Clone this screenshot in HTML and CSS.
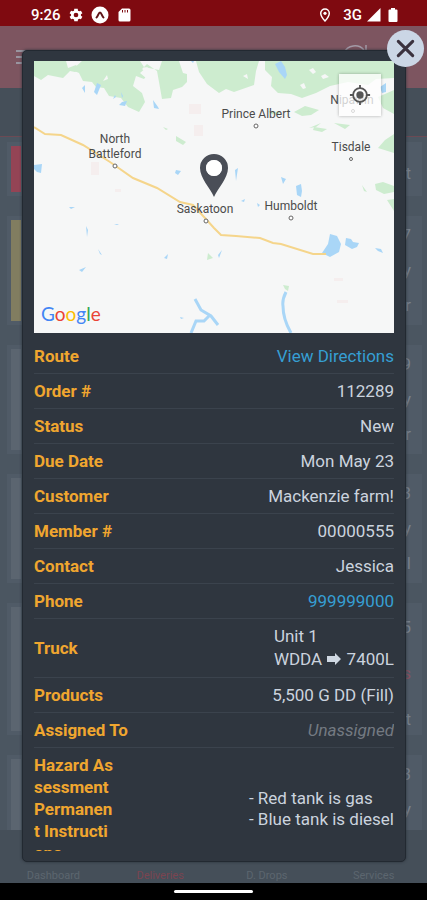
FILE: index.html
```html
<!DOCTYPE html>
<html lang="en">
<head>
<meta charset="utf-8">
<meta name="viewport" content="width=device-width, initial-scale=1">
<title>Deliveries</title>
<link rel="stylesheet" href="styles.css">
</head>
<body>
<header class="status">
  <div class="status-group">
    <span class="clock">9:26</span>
    <svg class="ico" viewBox="0 0 24 24"><path fill="#fff" d="M19.4 13a7.500 7.500 0 0 0 0-2l2.200-1.700-2.200-3.800-2.600 1a7.500 7.500 0 0 0-1.800-1L14.600 2.500H9.400L9 5.500a7.500 7.500 0 0 0-1.800 1l-2.600-1-2.200 3.800L4.600 11a7.500 7.500 0 0 0 0 2l-2.200 1.700 2.200 3.800 2.600-1a7.500 7.500 0 0 0 1.800 1l.4 3h5.200l.4-3a7.500 7.500 0 0 0 1.800-1l2.600 1 2.200-3.800zM12 15.500a3.500 3.500 0 1 1 0-7 3.500 3.500 0 0 1 0 7z"/></svg>
    <svg class="ico ico-app" viewBox="0 0 18 18"><circle cx="9" cy="9" r="8.500" fill="#fff"/><path d="M5.500 11.500C7 10.500 7.500 6.500 9 6.500s2 4 3.500 5" fill="none" stroke="#5d1418" stroke-width="2" stroke-linecap="round"/></svg>
    <svg class="ico" viewBox="0 0 16 16"><path fill="#fff" d="M6 1.500h7a1.500 1.500 0 0 1 1.500 1.500v10a1.500 1.500 0 0 1-1.500 1.500H4A1.500 1.500 0 0 1 2.500 13V5z"/><path d="M6.500 3v2.500M9 3v2.500M11.500 3v2.500" stroke="#7f0a10"/></svg>
  </div>
  <div class="status-group status-right">
    <svg class="ico" viewBox="0 0 16 16"><path d="M8 2a4.300 4.300 0 0 0-4.300 4.300C3.700 9.500 8 14 8 14s4.300-4.500 4.300-7.700A4.300 4.300 0 0 0 8 2z" fill="none" stroke="#fff" stroke-width="1.500"/><circle cx="8" cy="6.300" r="1.600" fill="#fff"/></svg>
    <span class="network">3G</span>
    <svg class="ico" viewBox="0 0 16 16"><path d="M1 14.500 14.500 1v13.500z" fill="#fff"/></svg>
    <svg class="ico ico-battery" viewBox="0 0 10 16"><path d="M3 1h4v1.500h1.500a1 1 0 0 1 1 1V14a1 1 0 0 1-1 1h-7a1 1 0 0 1-1-1V3.500a1 1 0 0 1 1-1H3z" fill="#fff"/></svg>
  </div>
</header>

<main class="stage">
  <div class="app" aria-hidden="true">
    <div class="app-bar">
      <svg class="menu" viewBox="0 0 20 16"><path d="M0 2h20M0 8h20M0 14h20" stroke="#a3aab5" stroke-width="1.500"/></svg>
      <svg class="sync" viewBox="0 0 28 28"><path d="M3 10a12 12 0 0 1 20-3M25 2v6h-7" fill="none" stroke="#a39aa6" stroke-width="1.500"/></svg>
    </div>
    <div class="filter-bar"></div>
    <div class="orders">
      <div class="order order-short order-red"><span>t</span></div>
      <div class="order order-yellow"><span>7</span><span>y</span><span>r</span></div>
      <div class="order"><span>9</span><span>y</span><span>r</span></div>
      <div class="order"><span>3</span><span>y</span><span>l</span></div>
      <div class="order order-tall"><span>5</span><span class="late">s</span><span>t</span></div>
      <div class="order"><span>3</span><span>y</span></div>
    </div>
    <div class="tabs"><span>Dashboard</span><span class="current">Deliveries</span><span>D. Drops</span><span>Services</span></div>
  </div>

  <section class="dialog" role="dialog">
    <button class="close" type="button" aria-label="Close"><svg viewBox="0 0 36 36"><path d="M11 11l14 14M25 11 11 25" stroke="#3b323e" stroke-width="3" stroke-linecap="round"/></svg></button>
    <div class="content">
      <div class="map">
        <svg class="map-art" viewBox="0 0 360 272" preserveAspectRatio="xMidYMid slice">
          <rect width="360" height="272" fill="#f6f7f7"/>
          <g fill="#cdeccf">
            <path d="M0 0h32l2 7 8-3 4 5-5 2-5-1-7 7-15-3-7 5-7-4z"/>
            <path d="M48 0h58l4 6 15 3 3-9h17l4 12 4 1v8l-5 5-9 3-2 8-9 1-3-17-2-11-10-7-5 5 6 5-4 5-8-3-3 10 9 7 3 9-6 10-11-5-7-9-12-2-5-8-8-1-4-5-9-1-4-8-7-3z"/>
            <path d="M162 0h63l-3 10-2 14-20 7-8-3-7 4-12-9-8-12z"/>
            <path d="M231 0h129v17l-18 1-8 6-20-3-18 4-14 7-14 5-11-4-13-1-7-7 1-9-7-7z"/>
            <path d="M344 36l16-7v24l-11-6zM260 51l11-6 14 4-8 5-9 1zM234 50l12 1-2 3-7-1zM275 67l12-5-5 4zM300 62l16 2-5 4z"/>
            <path d="M142 75l10 6-3 3-7-4zM129 66l5 2-2 1zM280 66l13 2-5 3-9-2zM360 73v19l-16-5 7-8zM341 123l8-2 11 4v6l-10 2-8-4zM353 139l7-1v12zM328 124l5 7-3-1zM174 192l5 5-6 2zM249 224l6 1-1 5-3-2z"/>
          </g>
          <g fill="#f6f7f7"><path d="M69 20l4-6 1 4zM209 15l4-2 1 5zM275 9l4-2 3 4-3 2zM287 15l4-2 4 3-6 2zM266 24l4-2 2 5-3 1zM106 12l7-6 5 5-6 6z"/></g>
          <g fill="#a9d6f7">
            <path d="M48 27l3-3v8zM60 31l3-9 4 2-4 10zM79 38l2-4 1 2zM88 41l5-1-2 5-6-1zM87 31l2 4-1 2zM119 39l5 7 1 2-5-1zM241 3l6-3 4 6 2 8-2 4-6-7zM346 26l6-4v9l-4 1zM157 0h3l-1 2zM76 72l1 3-1 2z"/>
            <path d="M0 104l8-1-1 9-4-1-3-3zM142 109l5 1-3 4-3-2zM201 109l3-2-2 13zM247 116l5 2-3 5zM262 125l5-2 1 7-1 6-4-2zM207 140l4-2-1 3zM223 142l3 2-2 2zM35 146h6l-4 2zM52 165l2 4-1 7zM80 163h5l-2 1zM64 188l4 6-2-1zM45 209l7-3-4 5zM130 197l4-4-1 5zM184 194l4-5-3 8zM146 256l4 1-3 1z"/>
            <path d="M296 173l7 2 4 8-2 8-9 5-8-4 6-9zM312 177l5 1 2 3 6 1-2 4-5 2-7-4zM341 187l6 1 2 4-5-2z"/>
          </g>
          <path d="M252 231q-4 8-3 14 0 13 8 27M161 238l6 11 10 6 7 9M176 254l-6 6h-8l-5 12" fill="none" stroke="#a9d6f7" stroke-width="3"/>
          <path d="M0 66l11 7 16 1 22 10 27 17 23 16 24 10 23 14 13 3 12 13 9 10 7 7 15 1 24 2 13 5 8 1 32 10h13" fill="none" stroke="#f5d58b" stroke-width="2"/>
          <g fill="#f5eeee"><path d="M155 43h12v10h-12zM160 64h9v11h-9zM57 101h8v13h-8zM81 128h6v3h-6zM303 239h11v3h-11zM300 217h9v3h-9z"/></g>
          <g fill="#fff" stroke="#666" stroke-width="1">
            <circle cx="222" cy="65" r="2"/><circle cx="81" cy="105" r="2"/><circle cx="172" cy="160" r="2"/><circle cx="257" cy="157" r="2"/><circle cx="317" cy="98" r="1.500"/><circle cx="319" cy="50" r="1.500"/>
          </g>
          <g class="place">
            <text x="222" y="57">Prince Albert</text>
            <text x="81" y="82">North</text>
            <text x="81" y="97">Battleford</text>
            <text x="171" y="152">Saskatoon</text>
            <text x="257" y="149">Humboldt</text>
            <text x="317" y="90">Tisdale</text>
            <text x="318" y="43">Nipawin</text>
          </g>
          <path fill-rule="evenodd" fill="#4a4e57" d="M180 93a14 14 0 0 0-14 14c0 10 10 20 14 29 4-9 14-19 14-29a14 14 0 0 0-14-14zm0 6a8 8 0 1 1 0 16 8 8 0 0 1 0-16z"/><circle cx="180" cy="107" r="8" fill="#fff"/>
          <text class="brand" x="7" y="260"><tspan fill="#4285f4">G</tspan><tspan fill="#ea4335">o</tspan><tspan fill="#fbbc05">o</tspan><tspan fill="#4285f4">g</tspan><tspan fill="#34a853">l</tspan><tspan fill="#ea4335">e</tspan></text>
        </svg>
        <button class="locate" type="button" aria-label="My location"><svg viewBox="0 0 24 24"><circle cx="12" cy="12" r="7.500" fill="none" stroke="#555" stroke-width="2"/><circle cx="12" cy="12" r="4" fill="#555"/><path d="M12 1v4M12 19v4M1 12h4M19 12h4" stroke="#555" stroke-width="2"/></svg></button>
      </div>
      <dl class="details">
        <div class="row"><dt>Route</dt><dd><a href="#route">View Directions</a></dd></div>
        <div class="row"><dt>Order #</dt><dd>112289</dd></div>
        <div class="row"><dt>Status</dt><dd>New</dd></div>
        <div class="row"><dt>Due Date</dt><dd>Mon May 23</dd></div>
        <div class="row"><dt>Customer</dt><dd>Mackenzie farm!</dd></div>
        <div class="row"><dt>Member #</dt><dd>00000555</dd></div>
        <div class="row"><dt>Contact</dt><dd>Jessica</dd></div>
        <div class="row"><dt>Phone</dt><dd><a href="tel:999999000">999999000</a></dd></div>
        <div class="row"><dt>Truck</dt><dd class="truck">Unit 1<br>WDDA <svg class="arrow" viewBox="0 0 16 12" role="img" aria-label="to"><path d="M1 3h8V0l6 6-6 6V9H1z" fill="#cfd8e2"/></svg> 7400L</dd></div>
        <div class="row"><dt>Products</dt><dd>5,500 G DD (Fill)</dd></div>
        <div class="row"><dt>Assigned To</dt><dd class="none">Unassigned</dd></div>
        <div class="row notes"><dt>Hazard Assessment Permanent Instructions</dt><dd>- Red tank is gas<br>- Blue tank is diesel</dd></div>
      </dl>
    </div>
  </section>
</main>
<footer class="home"><span class="handle"></span></footer>
</body>
</html>
```
FILE: styles.css
```css
* { box-sizing: border-box; }

body {
  margin: 0;
  height: 100vh;
  display: flex;
  flex-direction: column;
  overflow: hidden;
  background: #000;
  color: #cbd3de;
  font-family: Roboto, "Liberation Sans", sans-serif;
  font-size: 17px;
  line-height: 22px;
}

svg { display: block; }
button { border: 0; padding: 0; }

.status {
  display: flex;
  justify-content: space-between;
  align-items: center;
  height: 26px;
  padding: 4px 29px 0 31px;
  background: #7f0a10;
  color: #fff;
  font-size: 15px;
  font-weight: 500;
}
.status-group { display: flex; align-items: center; gap: 7px; }
.status-right { gap: 4px; }
.network { margin-left: 6px; }
.ico { width: 16px; height: 16px; }
.ico-app { width: 18px; height: 18px; }
.ico-battery { width: 10px; margin-left: 2px; }

.stage { flex: 1; min-height: 0; position: relative; }

.app {
  height: 100%;
  display: flex;
  flex-direction: column;
  background: #4b5661;
}
.app-bar {
  display: flex;
  justify-content: space-between;
  height: 62px;
  padding: 17px 58px 0 16px;
  background: #7d5560;
}
.menu { width: 20px; height: 28px; }
.sync { width: 28px; height: 28px; }
.filter-bar { height: 49px; background: #454f59; border-bottom: 1px solid #6c4a54; }

.orders {
  flex: 1;
  min-height: 0;
  overflow: hidden;
  display: flex;
  flex-direction: column;
  gap: 20px;
  padding: 5px 5px 0 7px;
}
.order {
  flex: none;
  height: 109px;
  padding: 1px 11px 0 4px;
  background: linear-gradient(#5b6570, #5b6570) 4px 4px / 10px calc(100% - 8px) no-repeat, #505b67;
  color: #77818d;
  text-align: right;
  display: grid;
  grid-auto-rows: 35px;
  align-items: center;
}
.order-short { height: 54px; grid-auto-rows: 60px; }
.order-tall { height: 132px; grid-auto-rows: 46px; }
.order-red { background-image: linear-gradient(#944455, #944455); }
.order-yellow { background-image: linear-gradient(#817d60, #817d60); }
.late { color: #84505f; }

.tabs {
  display: grid;
  grid-template-columns: repeat(4, 1fr);
  align-items: end;
  height: 53px;
  background: #454f59;
  color: #5c666f;
  font-size: 11px;
  line-height: 14px;
  text-align: center;
}
.current { color: #7b4450; }

.dialog {
  position: absolute;
  inset: 24px 21px 21px 22px;
  padding: 10px 11px;
  border: 1px solid #222931;
  border-radius: 5px;
  background: #2f363f;
  box-shadow: 0 0 3px #29313a;
}
.content { height: 100%; overflow: hidden; }

.close {
  position: absolute;
  top: -21px;
  right: -19px;
  z-index: 1;
  width: 37px;
  height: 37px;
  border-radius: 50%;
  background: #cbd6e5;
}

.map { position: relative; height: 272px; }
.map-art { width: 100%; height: 100%; }
.place { fill: #4b4b4b; font-size: 12px; text-anchor: middle; }
.brand { font-family: Lato, sans-serif; font-size: 19px; }
.locate {
  position: absolute;
  top: 13px;
  right: 13px;
  display: grid;
  place-items: center;
  width: 42px;
  height: 42px;
  background: rgba(255, 255, 255, .75);
  box-shadow: 0 0 3px rgba(0, 0, 0, .3);
}
.locate svg { width: 22px; height: 22px; }

.details { margin: 0; padding-top: 6px; }
.row {
  display: flex;
  justify-content: space-between;
  align-items: center;
  padding: 6px 0;
  border-bottom: 1px solid #3b434d;
}
dt { color: #f0a62f; font-weight: 700; }
dd { margin: 0; }
a { color: #369fd3; text-decoration: none; }
.truck { line-height: 23px; }
.arrow { display: inline-block; width: 16px; height: 12px; }
.none { color: #747a82; font-style: italic; }
.notes dt { width: 82px; word-break: break-all; }
.notes dd { line-height: 21px; }

.home { display: grid; place-items: center; height: 17px; background: #000; }
.handle { width: 79px; height: 3px; border-radius: 2px; background: #fff; }
```
